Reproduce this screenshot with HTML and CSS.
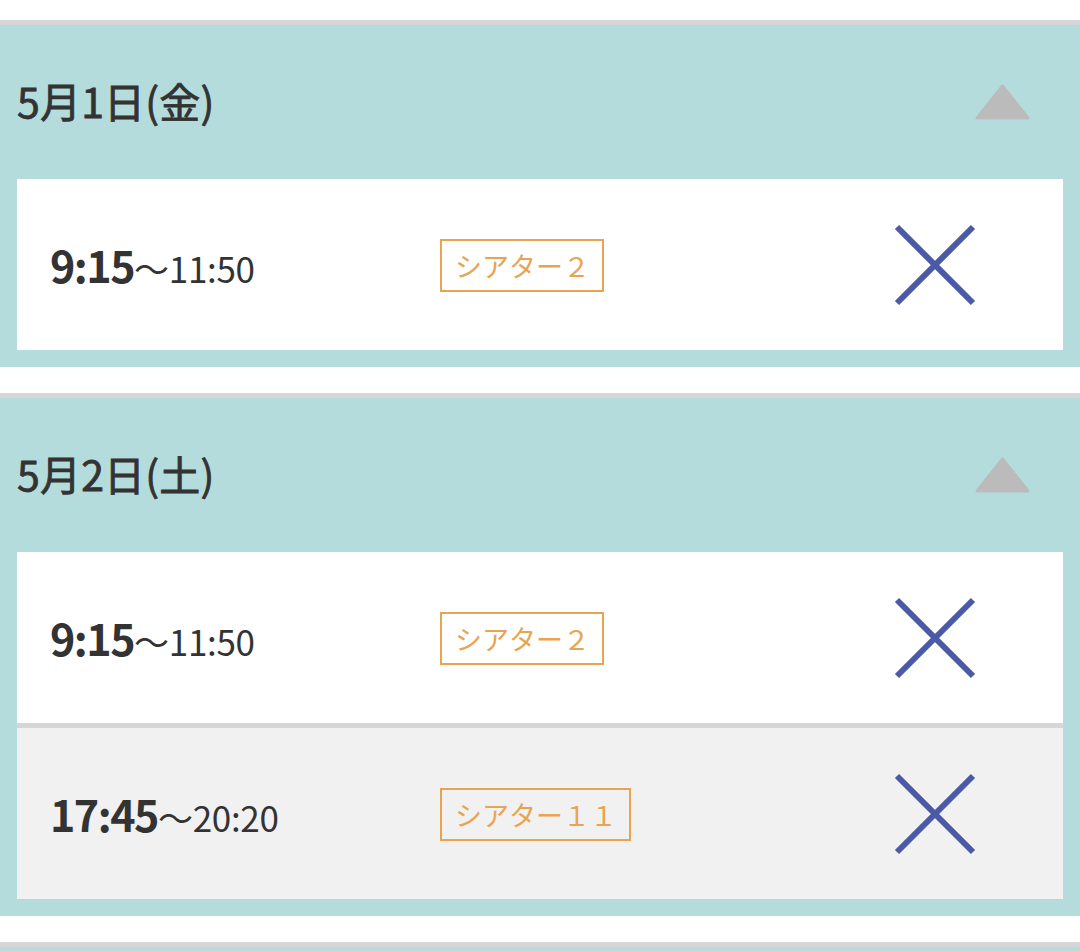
FILE: index.html
```html
<!DOCTYPE html>
<html lang="ja">
<head>
<meta charset="utf-8">
<title>スケジュール</title>
<link rel="stylesheet" href="styles.css">
</head>
<body>
<div class="list">
  <section class="day">
    <div class="day-head">
      <h2 class="day-title">5月1日(金)</h2>
      <svg class="toggle" width="55" height="36" viewBox="0 0 55 36"><polygon points="27.5,2 53,34 2,34" fill="#bbbbbb" stroke="#bbbbbb" stroke-width="3" stroke-linejoin="round"/></svg>
    </div>
    <div class="slots">
      <div class="slot">
        <div class="time"><span class="start">9:15</span><span class="end">～11:50</span></div>
        <div class="theater"><span class="badge">シアター２</span></div>
        <div class="mark"><svg width="82" height="82" viewBox="0 0 82 82"><path d="M3 3 L79 79 M79 3 L3 79" stroke="#4b5aa7" stroke-width="6" fill="none"/></svg></div>
      </div>
    </div>
  </section>
  <section class="day">
    <div class="day-head">
      <h2 class="day-title">5月2日(土)</h2>
      <svg class="toggle" width="55" height="36" viewBox="0 0 55 36"><polygon points="27.5,2 53,34 2,34" fill="#bbbbbb" stroke="#bbbbbb" stroke-width="3" stroke-linejoin="round"/></svg>
    </div>
    <div class="slots">
      <div class="slot">
        <div class="time"><span class="start">9:15</span><span class="end">～11:50</span></div>
        <div class="theater"><span class="badge">シアター２</span></div>
        <div class="mark"><svg width="82" height="82" viewBox="0 0 82 82"><path d="M3 3 L79 79 M79 3 L3 79" stroke="#4b5aa7" stroke-width="6" fill="none"/></svg></div>
      </div>
      <div class="slot slot-alt">
        <div class="time"><span class="start">17:45</span><span class="end">～20:20</span></div>
        <div class="theater"><span class="badge">シアター１１</span></div>
        <div class="mark"><svg width="82" height="82" viewBox="0 0 82 82"><path d="M3 3 L79 79 M79 3 L3 79" stroke="#4b5aa7" stroke-width="6" fill="none"/></svg></div>
      </div>
    </div>
  </section>
  <section class="day day-next">
    <div class="day-head"></div>
  </section>
</div>
</body>
</html>
```

FILE: styles.css
```css
html, body {
  margin: 0;
  padding: 0;
  background: #ffffff;
}
body {
  font-family: "Noto Sans CJK JP", "Noto Sans", sans-serif;
  color: #333333;
  overflow: hidden;
  height: 951px;
}
.list {
  padding-top: 20px;
  display: flex;
  flex-direction: column;
  gap: 26px;
}
.day {
  border-top: 5px solid #d6d6d6;
  background: #b4dcdc;
  padding: 0 17px 17px;
}
.day-head {
  height: 154px;
  display: flex;
  align-items: center;
  justify-content: space-between;
}
.day-title {
  margin: 0;
  font-size: 41px;
  font-weight: 400;
  -webkit-text-stroke: 0.8px #333333;
  line-height: 1;
  padding-bottom: 4px;
  letter-spacing: 0.2px;
}
.toggle {
  margin-right: 33px;
  display: block;
}
.slots {
  display: flex;
  flex-direction: column;
}
.slot {
  height: 171px;
  background: #ffffff;
  display: flex;
  align-items: center;
  padding-left: 33px;
}
.slot + .slot {
  border-top: 5px solid #d6d6d6;
}
.slot-alt {
  background: #f1f1f1;
}
.time {
  width: 390px;
  display: flex;
  align-items: baseline;
  padding-bottom: 2px;
}
.start {
  font-size: 43px;
  font-weight: 700;
  letter-spacing: -1.5px;
}
.end {
  font-size: 35px;
  font-weight: 400;
  letter-spacing: -0.3px;
}
.theater {
  flex: 1;
  display: flex;
}
.badge {
  display: inline-block;
  border: 2px solid #e8a452;
  color: #e8a452;
  font-size: 27px;
  line-height: 49px;
  padding: 0 12px 0 13px;
  margin-top: 2px;
}
.mark {
  width: 82px;
  margin-right: 87px;
  display: flex;
  align-items: center;
  justify-content: center;
  padding-top: 1px;
}
.mark svg {
  display: block;
}
```
